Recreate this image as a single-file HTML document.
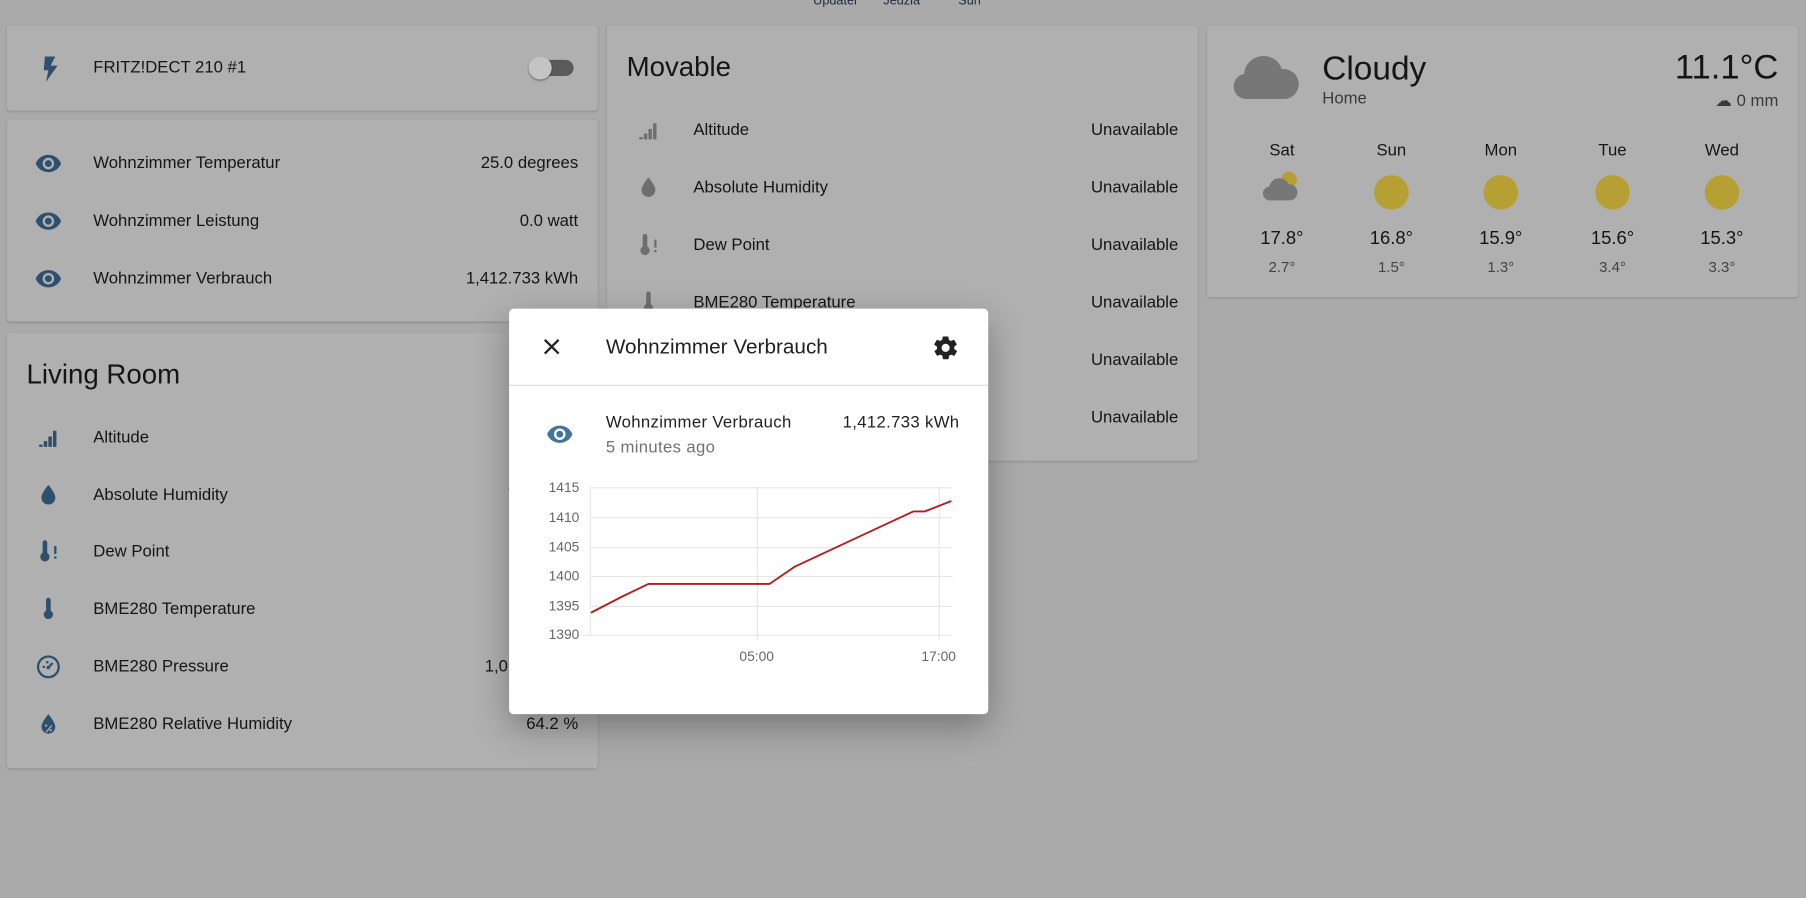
<!DOCTYPE html>
<html><head><meta charset="utf-8"><style>
html,body{margin:0;padding:0;width:1806px;height:898px;overflow:hidden;background:#aaaaaa;font-family:"Liberation Sans",sans-serif}
#w{position:absolute;left:0;top:0;width:1568px;height:780px;transform:scale(1.15179);transform-origin:0 0;background:#aaaaaa;color:#151515}
.card{position:absolute;background:#b0b0b0;border-radius:3px;box-shadow:0 1px 2px rgba(0,0,0,.15)}
.row{position:absolute;left:0;right:0;height:40px;font-size:14.5px}
.row .ic{position:absolute;left:24px;top:8px;width:24px;height:24px}
.row .n{position:absolute;left:75px;top:12px}
.row .v{position:absolute;right:17px;top:12px}
h2{position:absolute;margin:0;font-weight:400;font-size:24px}
.ico{fill:#2e4f6d}
.gi{fill:#6e6e6e}
.d{position:absolute;text-align:center;width:60px;font-size:14.5px}
.sun{position:absolute;width:30px;height:30px;border-radius:50%;background:#b7a033}
</style></head><body><div id="w">
<div style="position:absolute;top:-5px;left:706px;font-size:11px;color:#1c2d3c">Updater</div>
<div style="position:absolute;top:-5px;left:767px;font-size:11px;color:#1c2d3c">Jedzia</div>
<div style="position:absolute;top:-5px;left:832px;font-size:11px;color:#1c2d3c">Sun</div>

<div class="card" style="left:6px;top:22px;width:513px;height:74px">
 <svg style="position:absolute;left:30px;top:27px" width="16" height="22" viewBox="0 0 16 22"><path class="ico" d="M3 0h9l-4 8h6L4 22l2-10H2z"/></svg>
 <div style="position:absolute;left:75px;top:29px;font-size:14.5px">FRITZ!DECT 210 #1</div>
 <div style="position:absolute;left:462px;top:30px;width:30px;height:14px;border-radius:7px;background:#5a5a5a"></div>
 <div style="position:absolute;left:453px;top:27px;width:20px;height:20px;border-radius:50%;background:#c4c4c4;box-shadow:0 1px 2px rgba(0,0,0,.4)"></div>
</div>

<div class="card" style="left:6px;top:104px;width:513px;height:175px">
 <div class="row" style="top:18px"><svg class="ic" viewBox="0 0 24 24"><path class="ico" d="M12 4.5C7 4.5 2.7 7.6 1 12c1.7 4.4 6 7.5 11 7.5s9.3-3.1 11-7.5c-1.7-4.4-6-7.5-11-7.5zM12 17a5 5 0 110-10 5 5 0 010 10zm0-8a3 3 0 100 6 3 3 0 000-6z"/></svg><span class="n">Wohnzimmer Temperatur</span><span class="v">25.0 degrees</span></div>
 <div class="row" style="top:68px"><svg class="ic" viewBox="0 0 24 24"><path class="ico" d="M12 4.5C7 4.5 2.7 7.6 1 12c1.7 4.4 6 7.5 11 7.5s9.3-3.1 11-7.5c-1.7-4.4-6-7.5-11-7.5zM12 17a5 5 0 110-10 5 5 0 010 10zm0-8a3 3 0 100 6 3 3 0 000-6z"/></svg><span class="n">Wohnzimmer Leistung</span><span class="v">0.0 watt</span></div>
 <div class="row" style="top:118px"><svg class="ic" viewBox="0 0 24 24"><path class="ico" d="M12 4.5C7 4.5 2.7 7.6 1 12c1.7 4.4 6 7.5 11 7.5s9.3-3.1 11-7.5c-1.7-4.4-6-7.5-11-7.5zM12 17a5 5 0 110-10 5 5 0 010 10zm0-8a3 3 0 100 6 3 3 0 000-6z"/></svg><span class="n">Wohnzimmer Verbrauch</span><span class="v">1,412.733 kWh</span></div>
</div>

<div class="card" style="left:6px;top:289px;width:513px;height:378px">
 <h2 style="left:17px;top:23px">Living Room</h2>
 <div class="row" style="top:71px"><svg class="ic" viewBox="0 0 24 24"><path class="ico" d="M4 18h3v2H4zm4-3h3v5H8zm4-4h3v9h-3zm4-5h3v14h-3z"/></svg><span class="n">Altitude</span></div>
 <div class="row" style="top:121px"><svg class="ic" viewBox="0 0 24 24"><path class="ico" d="M12 3s-6 7-6 11a6 6 0 0012 0c0-4-6-11-6-11z"/></svg><span class="n">Absolute Humidity</span><span class="v" style="right:70px">7</span></div>
 <div class="row" style="top:170px"><svg class="ic" viewBox="0 0 24 24"><path class="ico" d="M9 2a2 2 0 00-2 2v9a4 4 0 104 0V4a2 2 0 00-2-2zm8 5h2v7h-2zm0 9h2v2h-2z"/></svg><span class="n">Dew Point</span></div>
 <div class="row" style="top:220px"><svg class="ic" viewBox="0 0 24 24"><path class="ico" d="M12 2a2 2 0 00-2 2v9a4 4 0 104 0V4a2 2 0 00-2-2z"/></svg><span class="n">BME280 Temperature</span></div>
 <div class="row" style="top:270px"><svg class="ic" viewBox="0 0 24 24"><path class="ico" d="M12 2a10 10 0 100 20 10 10 0 000-20zm0 2a8 8 0 110 16 8 8 0 010-16zm-5 7h2v2H7zm3-4h2v2h-2zm5 1l1.4 1.4-3 3.1a1.5 1.5 0 11-1.4-1.4z"/></svg><span class="n">BME280 Pressure</span><span class="v" style="right:78px">1,0</span></div>
 <div class="row" style="top:320px"><svg class="ic" viewBox="0 0 24 24"><path class="ico" d="M12 3s-6 7-6 11a6 6 0 0012 0c0-4-6-11-6-11zm-2 9a1 1 0 110 2 1 1 0 010-2zm4 4a1 1 0 110 2 1 1 0 010-2zm-4.5 2.5l5-6 .8.7-5 6z"/></svg><span class="n">BME280 Relative Humidity</span><span class="v">64.2 %</span></div>
</div>

<div class="card" style="left:527px;top:22px;width:513px;height:378px">
 <h2 style="left:17px;top:23px">Movable</h2>
 <div class="row" style="top:71px"><svg class="ic" viewBox="0 0 24 24"><path class="gi" d="M4 18h3v2H4zm4-3h3v5H8zm4-4h3v9h-3zm4-5h3v14h-3z"/></svg><span class="n">Altitude</span><span class="v">Unavailable</span></div>
 <div class="row" style="top:121px"><svg class="ic" viewBox="0 0 24 24"><path class="gi" d="M12 3s-6 7-6 11a6 6 0 0012 0c0-4-6-11-6-11z"/></svg><span class="n">Absolute Humidity</span><span class="v">Unavailable</span></div>
 <div class="row" style="top:171px"><svg class="ic" viewBox="0 0 24 24"><path class="gi" d="M9 2a2 2 0 00-2 2v9a4 4 0 104 0V4a2 2 0 00-2-2zm8 5h2v7h-2zm0 9h2v2h-2z"/></svg><span class="n">Dew Point</span><span class="v">Unavailable</span></div>
 <div class="row" style="top:221px"><svg class="ic" viewBox="0 0 24 24"><path class="gi" d="M12 2a2 2 0 00-2 2v9a4 4 0 104 0V4a2 2 0 00-2-2z"/></svg><span class="n">BME280 Temperature</span><span class="v">Unavailable</span></div>
 <div class="row" style="top:271px"><span class="v">Unavailable</span></div>
 <div class="row" style="top:321px"><span class="v">Unavailable</span></div>
</div>

<div class="card" style="left:1048px;top:22px;width:513px;height:236px">
 <svg style="position:absolute;left:20px;top:20px" width="60" height="48" viewBox="0 0 60 48"><path fill="#777" d="M14 44a11 11 0 01-2-21.8A17 17 0 0145 18a13 13 0 013 26z"/></svg>
 <div style="position:absolute;left:100px;top:22px;font-size:29px">Cloudy</div>
 <div style="position:absolute;left:100px;top:56px;font-size:14.5px;color:#3a3a3a">Home</div>
 <div style="position:absolute;right:17px;top:20px;font-size:30px">11.1°C</div>
 <div style="position:absolute;right:17px;top:58px;font-size:14.5px;color:#3a3a3a">☁ 0 mm</div>
 <div class="d" style="left:35px;top:101px">Sat</div><div class="d" style="left:130px;top:101px">Sun</div><div class="d" style="left:225px;top:101px">Mon</div><div class="d" style="left:322px;top:101px">Tue</div><div class="d" style="left:417px;top:101px">Wed</div>
 <svg style="position:absolute;left:47px;top:124px" width="36" height="32" viewBox="0 0 36 32"><circle cx="24" cy="10" r="7" fill="#b7a033"/><path fill="#777" d="M8 28a6 6 0 01-1-12A9 9 0 0124 14a7 7 0 011 14z"/></svg>
 <div class="sun" style="left:145px;top:130px"></div><div class="sun" style="left:240px;top:130px"></div><div class="sun" style="left:337px;top:130px"></div><div class="sun" style="left:432px;top:130px"></div>
 <div class="d" style="left:35px;top:177px;font-size:16px">17.8°</div><div class="d" style="left:130px;top:177px;font-size:16px">16.8°</div><div class="d" style="left:225px;top:177px;font-size:16px">15.9°</div><div class="d" style="left:322px;top:177px;font-size:16px">15.6°</div><div class="d" style="left:417px;top:177px;font-size:16px">15.3°</div>
 <div class="d" style="left:35px;top:202px;font-size:13px;color:#444">2.7°</div><div class="d" style="left:130px;top:202px;font-size:13px;color:#444">1.5°</div><div class="d" style="left:225px;top:202px;font-size:13px;color:#444">1.3°</div><div class="d" style="left:322px;top:202px;font-size:13px;color:#444">3.4°</div><div class="d" style="left:417px;top:202px;font-size:13px;color:#444">3.3°</div>
</div>

<div style="position:absolute;left:442px;top:268px;width:416px;height:352px;background:#fff;border-radius:4px;box-shadow:0 11px 30px rgba(0,0,0,.3)">
 <svg style="position:absolute;left:29px;top:25px" width="16" height="16" viewBox="0 0 16 16"><path d="M2 2l12 12M14 2L2 14" stroke="#222" stroke-width="2"/></svg>
 <div style="position:absolute;left:84px;top:23px;font-size:18px;color:#212121">Wohnzimmer Verbrauch</div>
 <svg style="position:absolute;left:367px;top:22px" width="24" height="24" viewBox="0 0 24 24"><path fill="#222" d="M12 15.5A3.5 3.5 0 1112 8.5a3.5 3.5 0 010 7zm7.4-2.5c.1-.3.1-.7.1-1s0-.7-.1-1l2.1-1.6c.2-.2.2-.4.1-.6l-2-3.5c-.1-.2-.4-.3-.6-.2l-2.5 1c-.5-.4-1.1-.7-1.7-1l-.4-2.6c0-.2-.2-.4-.5-.4h-4c-.2 0-.4.2-.5.4l-.4 2.6c-.6.3-1.2.6-1.7 1l-2.5-1c-.2-.1-.5 0-.6.2l-2 3.5c-.1.2-.1.5.1.6L4.6 11c0 .3-.1.7-.1 1s0 .7.1 1l-2.1 1.6c-.2.2-.2.4-.1.6l2 3.5c.1.2.4.3.6.2l2.5-1c.5.4 1.1.7 1.7 1l.4 2.6c0 .2.2.4.5.4h4c.2 0 .4-.2.5-.4l.4-2.6c.6-.3 1.2-.6 1.7-1l2.5 1c.2.1.5 0 .6-.2l2-3.5c.1-.2.1-.5-.1-.6z"/></svg>
 <div style="position:absolute;left:0;right:0;top:66px;height:1px;background:#e0e0e0"></div>
 <svg style="position:absolute;left:32px;top:97px" width="24" height="24" viewBox="0 0 24 24"><path fill="#44739e" d="M12 4.5C7 4.5 2.7 7.6 1 12c1.7 4.4 6 7.5 11 7.5s9.3-3.1 11-7.5c-1.7-4.4-6-7.5-11-7.5zM12 17a5 5 0 110-10 5 5 0 010 10zm0-8a3 3 0 100 6 3 3 0 000-6z"/></svg>
 <div style="position:absolute;left:84px;top:91px;font-size:14.5px;color:#212121;letter-spacing:.3px">Wohnzimmer Verbrauch</div>
 <div style="position:absolute;right:25px;top:91px;font-size:14.5px;color:#212121;letter-spacing:.3px">1,412.733 kWh</div>
 <div style="position:absolute;left:84px;top:113px;font-size:14.5px;color:#727272;letter-spacing:.3px">5 minutes ago</div>
 <svg style="position:absolute;left:0;top:0" width="416" height="352" viewBox="442 268 416 352">
  <g stroke="#e6e6e6" stroke-width="1">
   <line x1="513" y1="423.5" x2="827" y2="423.5"/><line x1="513" y1="449.5" x2="827" y2="449.5"/><line x1="513" y1="475.5" x2="827" y2="475.5"/><line x1="513" y1="500.5" x2="827" y2="500.5"/><line x1="513" y1="526.5" x2="827" y2="526.5"/><line x1="506" y1="551.5" x2="827" y2="551.5"/>
   <line x1="512.5" y1="423" x2="512.5" y2="551"/><line x1="657.5" y1="423" x2="657.5" y2="556"/><line x1="815.5" y1="423" x2="815.5" y2="556"/>
  </g>
  <g font-size="12" fill="#666" font-family="Liberation Sans" text-anchor="end">
   <text x="503" y="427">1415</text><text x="503" y="453">1410</text><text x="503" y="479">1405</text><text x="503" y="504">1400</text><text x="503" y="530">1395</text><text x="503" y="555">1390</text>
  </g>
  <g font-size="12" fill="#666" font-family="Liberation Sans" text-anchor="middle"><text x="657" y="574">05:00</text><text x="815" y="574">17:00</text></g>
  <polyline fill="none" stroke="#b71c1c" stroke-width="1.6" points="513,532 540,518 563,507 668,507 690,492 793,444 803,444 826,435"/>
 </svg>
</div>
</div></body></html>
